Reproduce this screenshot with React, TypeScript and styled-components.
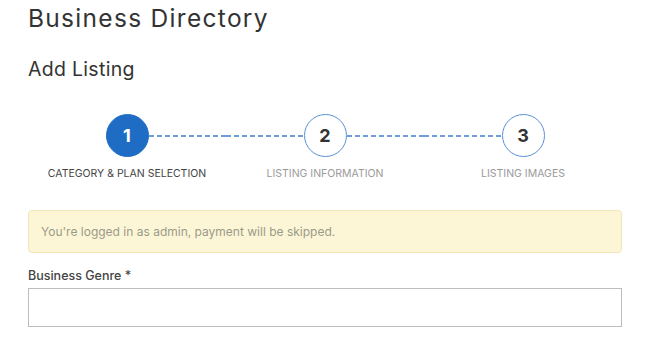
import React from "react";
import styled, { createGlobalStyle } from "styled-components";

const GlobalStyle = createGlobalStyle`
    body {
        margin: 0;
        background: #ffffff;
        font-family: "Inter", "Liberation Sans", sans-serif;
    }
`;

interface Step {
    number: number;
    label: string;
}

const steps: Step[] = [
    { number: 1, label: "Category & Plan Selection" },
    { number: 2, label: "Listing Information" },
    { number: 3, label: "Listing Images" },
];

const activeStep = 1;

export default function App() {
    return (
        <>
            <GlobalStyle />
            <Page>
                <PageTitle>Business Directory</PageTitle>
                <SectionTitle>Add Listing</SectionTitle>
                <Stepper>
                    {steps.map((step, index) => (
                        <StepItem key={step.number}>
                            <CircleRow>
                                <Connector visible={index > 0} />
                                <Circle active={step.number === activeStep}>{step.number}</Circle>
                                <Connector visible={index < steps.length - 1} />
                            </CircleRow>
                            <StepLabel active={step.number === activeStep}>{step.label}</StepLabel>
                        </StepItem>
                    ))}
                </Stepper>
                <Notice>You're logged in as admin, payment will be skipped.</Notice>
                <Field>
                    <FieldLabel>Business Genre *</FieldLabel>
                    <TextInput type="text" />
                </Field>
            </Page>
        </>
    );
}

const Page = styled.div`
    width: 594px;
    padding: 3px 0 0 28px;
`;

const PageTitle = styled.h1`
    margin: 0;
    font-size: 24.5px;
    line-height: 30px;
    font-weight: 400;
    letter-spacing: 1.3px;
    color: #333333;
`;

const SectionTitle = styled.h2`
    margin: 24px 0 0;
    font-size: 19.5px;
    line-height: 24px;
    font-weight: 400;
    letter-spacing: 0.3px;
    color: #333333;
`;

const Stepper = styled.div`
    display: grid;
    grid-template-columns: repeat(3, 1fr);
    margin-top: 33px;
`;

const StepItem = styled.div`
    display: flex;
    flex-direction: column;
    align-items: center;
`;

const CircleRow = styled.div`
    display: flex;
    align-items: center;
    width: 100%;
`;

const Connector = styled.div<{ visible: boolean }>`
    flex: 1;
    height: 2px;
    background-image: ${props =>
        props.visible
            ? "linear-gradient(to right, #6c9ddd 0, #6c9ddd 5px, rgba(255,255,255,0) 5px, rgba(255,255,255,0) 8px)"
            : "none"};
    background-size: 8px 2px;
    background-repeat: repeat-x;
`;

const Circle = styled.div<{ active: boolean }>`
    width: 43px;
    height: 43px;
    flex: none;
    box-sizing: border-box;
    border-radius: 50%;
    display: flex;
    align-items: center;
    justify-content: center;
    font-size: 18px;
    font-weight: 700;
    background: ${props => (props.active ? "#1f6cc4" : "#ffffff")};
    color: ${props => (props.active ? "#ffffff" : "#333333")};
    border: 1.5px solid ${props => (props.active ? "#1f6cc4" : "#5a90d6")};
`;

const StepLabel = styled.div<{ active: boolean }>`
    margin-top: 10px;
    font-size: 10.5px;
    line-height: 14px;
    text-transform: uppercase;
    color: ${props => (props.active ? "#444444" : "#9a9a9a")};
`;

const Notice = styled.div`
    margin-top: 29px;
    height: 43px;
    box-sizing: border-box;
    display: flex;
    align-items: center;
    padding: 0 12px;
    background: #fdf6d6;
    border: 1px solid #f1e6b8;
    border-radius: 4px;
    font-size: 12px;
    color: #9a9a8a;
`;

const Field = styled.div`
    margin-top: 15px;
    display: flex;
    flex-direction: column;
`;

const FieldLabel = styled.label`
    font-size: 12.5px;
    line-height: 16px;
    font-weight: 500;
    color: #444444;
`;

const TextInput = styled.input`
    margin-top: 4px;
    height: 39px;
    box-sizing: border-box;
    border: 1px solid #bdbdbd;
    border-radius: 0;
    outline: none;
    padding: 0 10px;
    font-family: inherit;
    font-size: 13px;
`;
